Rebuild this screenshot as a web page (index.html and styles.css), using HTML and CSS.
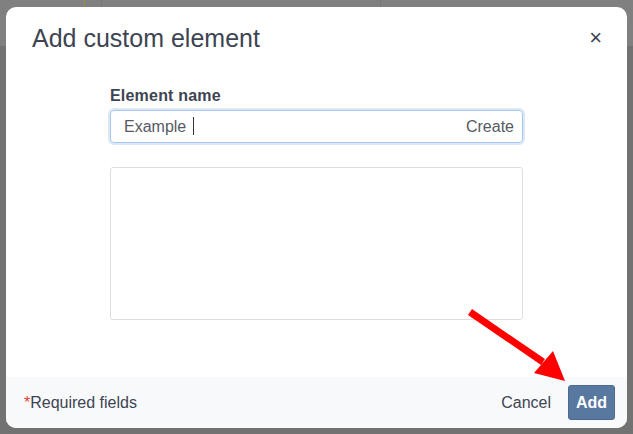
FILE: index.html
```html
<!DOCTYPE html>
<html>
<head>
<meta charset="utf-8">
<link rel="stylesheet" href="styles.css">
</head>
<body>
<div class="backdrop">
  <div class="bg-strip">
    <span class="bg-line l1"></span>
    <span class="bg-line l2"></span>
    <span class="bg-line l3"></span>
  </div>
  <div class="dialog">
    <div class="header">
      <h1 class="title">Add custom element</h1>
      <span class="close">×</span>
    </div>
    <div class="body">
      <label class="label">Element name</label>
      <div class="input">
        <span class="value">Example<span class="caret"></span></span>
        <span class="create">Create</span>
      </div>
      <div class="list"></div>
    </div>
    <div class="footer">
      <span class="req"><span class="star">*</span>Required fields</span>
      <div class="actions">
        <span class="cancel">Cancel</span>
        <span class="add">Add</span>
      </div>
    </div>
  </div>
  <svg class="arrow" width="633" height="434" viewBox="0 0 633 434">
    <line x1="470" y1="312" x2="543" y2="362" stroke="#ff0000" stroke-width="7"/>
    <polygon points="565,381 534,373 553,351" fill="#ff0000"/>
  </svg>
</div>
</body>
</html>
```
FILE: styles.css
```css
html, body {
  margin: 0;
  padding: 0;
}
body {
  width: 633px;
  height: 434px;
  overflow: hidden;
  font-family: "Liberation Sans", Arial, sans-serif;
}
.backdrop {
  position: relative;
  width: 633px;
  height: 434px;
  background: linear-gradient(#808080 0, #808080 46px, #727272 46px, #727272 100%);
  padding: 7px 6px 0 6px;
  box-sizing: border-box;
}
.bg-strip {
  position: absolute;
  left: 0;
  top: 0;
  width: 633px;
  height: 46px;
}
.bg-line {
  position: absolute;
  top: 0;
  width: 1px;
  height: 46px;
  background: #767676;
}
.l1 { left: 84px; background: #a08a40; }
.l2 { left: 101px; }
.l3 { left: 380px; }
.dialog {
  position: relative;
  z-index: 1;
  width: 621px;
  height: 421px;
  background: #ffffff;
  border-radius: 10px;
  display: flex;
  flex-direction: column;
  overflow: hidden;
}
.header {
  display: flex;
  align-items: center;
  justify-content: space-between;
  padding: 17px 25px 0 26px;
  height: 44px;
  box-sizing: border-box;
}
.title {
  margin: 0;
  font-weight: normal;
  font-size: 25px;
  line-height: 28px;
  color: #3d4452;
}
.close {
  font-size: 22px;
  color: #3d4452;
  line-height: 1;
}
.body {
  flex: 1;
  padding: 36px 104px 0 104px;
  display: flex;
  flex-direction: column;
}
.label {
  font-weight: bold;
  font-size: 16px;
  color: #3d4452;
  line-height: 17px;
  margin-bottom: 6px;
  letter-spacing: 0.2px;
}
.input {
  height: 33px;
  box-sizing: border-box;
  border: 1px solid #a9c7ee;
  border-radius: 4px;
  box-shadow: 0 0 0 2px #dbe8f8;
  display: flex;
  align-items: center;
  justify-content: space-between;
  padding: 0 8px 0 13px;
  font-size: 16px;
  color: #555a63;
}
.caret {
  display: inline-block;
  width: 1px;
  height: 18px;
  background: #333;
  margin-left: 7px;
  vertical-align: -3px;
}
.list {
  margin-top: 24px;
  height: 153px;
  box-sizing: border-box;
  border: 1px solid #dedede;
  border-radius: 3px;
}
.footer {
  height: 51px;
  background: #f8f9fa;
  display: flex;
  align-items: center;
  justify-content: space-between;
  padding: 0 12px 0 18px;
  box-sizing: border-box;
}
.req {
  font-size: 16px;
  color: #3d4452;
}
.star {
  color: #e0403a;
}
.actions {
  display: flex;
  align-items: center;
  gap: 17px;
}
.cancel {
  font-size: 16px;
  color: #3d4452;
}
.add {
  width: 47px;
  height: 35px;
  background: #58789f;
  border: 1px solid #4a6a91;
  box-sizing: border-box;
  border-radius: 3px;
  color: #ffffff;
  font-weight: bold;
  font-size: 16px;
  display: flex;
  align-items: center;
  justify-content: center;
}
.arrow {
  position: absolute;
  left: 0;
  top: 0;
  z-index: 2;
}
```
